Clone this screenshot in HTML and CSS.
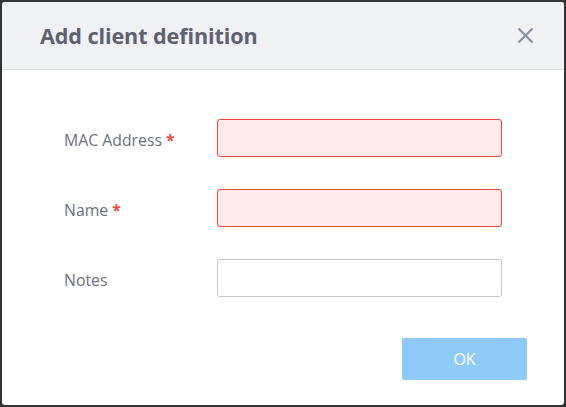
FILE: index.html
```html
<!DOCTYPE html>
<html>
<head>
<meta charset="utf-8">
<link rel="stylesheet" href="styles.css">
</head>
<body>
<div class="dialog">
  <div class="header">
    <h1 class="title">Add client definition</h1>
    <button class="close" aria-label="Close">
      <svg width="17" height="17" viewBox="0 0 17 17"><path d="M1.5 1.5 L15.5 15.5 M15.5 1.5 L1.5 15.5" stroke="#8e93a3" stroke-width="2.4" fill="none"/></svg>
    </button>
  </div>
  <div class="body">
    <div class="row">
      <label class="label">MAC Address <span class="req">*</span></label>
      <input class="field invalid" type="text">
    </div>
    <div class="row">
      <label class="label">Name <span class="req">*</span></label>
      <input class="field invalid" type="text">
    </div>
    <div class="row">
      <label class="label">Notes</label>
      <input class="field" type="text">
    </div>
    <div class="actions">
      <button class="ok">OK</button>
    </div>
  </div>
</div>
</body>
</html>
```
FILE: styles.css
```css
html, body { margin: 0; padding: 0; }
body {
  background: #333333;
  padding: 2px;
  width: 562px;
  height: 403px;
  font-family: "Open Sans", "Noto Sans", sans-serif;
}
.dialog {
  width: 562px;
  height: 403px;
  background: #ffffff;
  border-radius: 3px;
  overflow: hidden;
  display: flex;
  flex-direction: column;
}
.header {
  height: 67px;
  background: #f0f1f5;
  border-bottom: 1px solid #dcdde3;
  display: flex;
  align-items: center;
  justify-content: space-between;
  padding: 0 30px 0 38px;
}
.title {
  margin: 0;
  font-size: 21.6px;
  font-weight: 700;
  color: #5f6170;
  letter-spacing: -0.1px;
}
.close {
  border: none;
  background: none;
  padding: 0;
  width: 17px;
  height: 17px;
  display: flex;
}
.body {
  padding: 49px 37px 0 62px;
  display: flex;
  flex-direction: column;
  gap: 32px;
}
.row {
  display: flex;
  align-items: center;
  height: 38px;
}
.label {
  width: 153px;
  padding-top: 3px;
  font-size: 15.8px;
  color: #6e7180;
}
.req { color: #e74c3c; font-weight: 700; }
.field {
  box-sizing: border-box;
  width: 285px;
  height: 38px;
  margin: 0;
  border: 1px solid #c7c7c7;
  border-radius: 3px;
  background: #ffffff;
  outline: none;
}
.field.invalid {
  border-color: #e74c3c;
  background: #fdeaea;
}
.actions {
  display: flex;
  justify-content: flex-end;
  margin-top: 9px;
}
.ok {
  width: 125px;
  height: 42px;
  border: none;
  border-radius: 2px;
  background: #90caf9;
  color: #ffffff;
  font-family: "Open Sans", "Noto Sans", sans-serif;
  font-size: 16px;
}
```
